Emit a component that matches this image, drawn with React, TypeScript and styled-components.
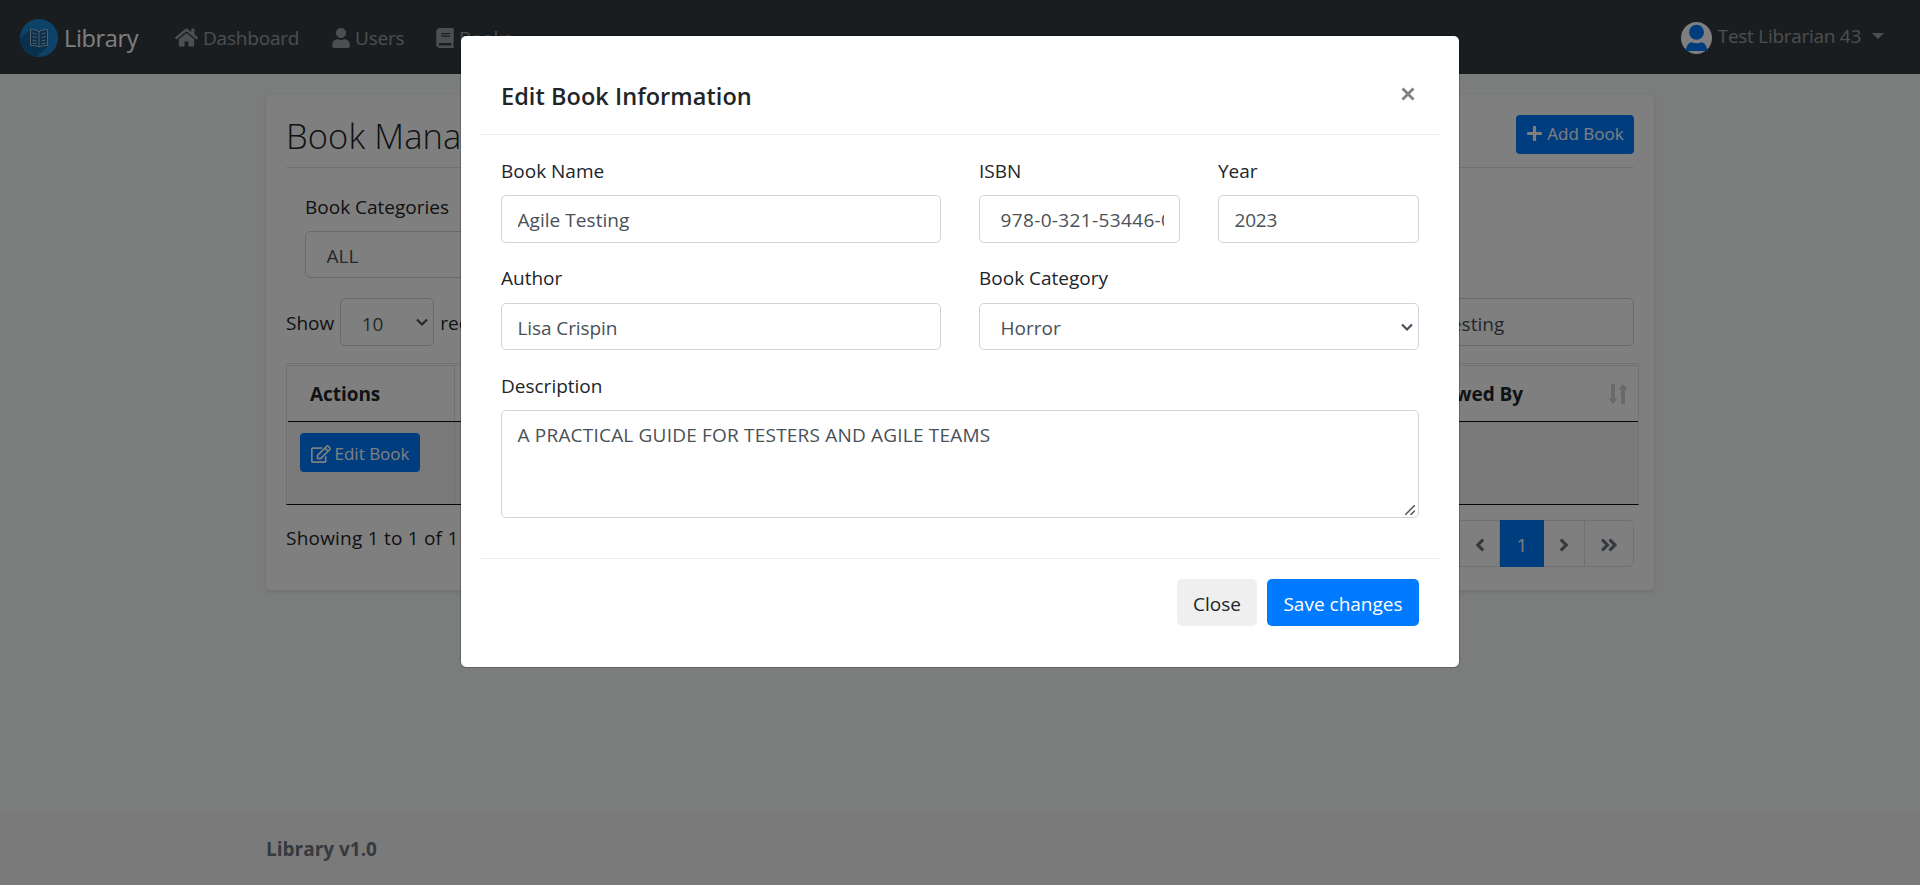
import React from 'react';
import styled, { createGlobalStyle } from 'styled-components';
import {
  FaHome,
  FaUser,
  FaBook,
  FaPlus,
  FaRegEdit,
  FaAngleLeft,
  FaAngleRight,
  FaAngleDoubleLeft,
  FaAngleDoubleRight,
} from 'react-icons/fa';

const GlobalStyle = createGlobalStyle`
  *, *::before, *::after { box-sizing: border-box; }
  body {
    margin: 0;
    overflow: hidden;
    background: #f5faf7;
    color: #212529;
    font-family: "Segoe UI", "Open Sans", "Noto Sans", sans-serif;
    font-size: 19px;
    line-height: 30px;
  }
  svg { display: block; flex: none; }
`;

const Page = styled.div`
  display: flex;
  flex-direction: column;
  height: 885px;
`;

/* ---------- navigation ---------- */

const Navbar = styled.nav`
  display: flex;
  align-items: center;
  height: 74px;
  flex: none;
  padding: 0 36px 0 20px;
  background: #343a40;
`;

const Brand = styled.a`
  display: flex;
  align-items: center;
  gap: 6px;
  width: 155px;
  padding-top: 1px;
  color: #fff;
  font-size: 23.5px;
  letter-spacing: -0.35px;
`;

const NavItem = styled.a<{ $width: number; $gap?: number }>`
  display: flex;
  align-items: center;
  gap: ${(p) => p.$gap ?? 4}px;
  width: ${(p) => p.$width}px;
  padding-top: 1px;
  color: rgba(255, 255, 255, 0.5);
  letter-spacing: -0.2px;
`;

const UserMenu = styled.a`
  display: flex;
  align-items: center;
  gap: 6px;
  margin-left: auto;
  padding-top: 2px;
  color: rgba(255, 255, 255, 0.5);
  letter-spacing: -0.28px;
`;

const UserName = styled.span`
  padding-bottom: 4px;
`;

const Caret = styled.span`
  margin: 0 0 5px 5px;
  border: 6px solid transparent;
  border-top-color: currentColor;
  border-bottom: 0;
`;

/* ---------- card ---------- */

const Card = styled.main`
  display: flex;
  flex-direction: column;
  width: 1388px;
  height: 495px;
  margin: 21px auto 0;
  padding: 20px;
  border-radius: 5px;
  background: #fff;
  box-shadow: 0 2px 5px rgba(0, 0, 0, 0.1);
`;

const CardHeader = styled.header`
  display: flex;
  justify-content: space-between;
  align-items: flex-start;
  height: 53px;
  border-bottom: 1px solid #e5e5e5;
`;

const CardTitle = styled.h2`
  margin: 0;
  font-size: 34.5px;
  font-weight: 300;
  line-height: 42px;
  letter-spacing: 0.1px;
`;

const Button = styled.button<{ $tone?: 'primary' | 'plain'; $small?: boolean }>`
  display: inline-flex;
  align-items: center;
  justify-content: center;
  gap: 4px;
  height: ${(p) => (p.$small ? '39px' : '47px')};
  padding: ${(p) => (p.$small ? '0 11px' : '3px 16px 0')};
  border: 0;
  border-radius: ${(p) => (p.$small ? '4px' : '5px')};
  background: ${(p) => (p.$tone === 'plain' ? '#efefef' : '#007bff')};
  color: ${(p) => (p.$tone === 'plain' ? '#212529' : '#fff')};
  font-family: inherit;
  font-size: ${(p) => (p.$small ? '17px' : '19px')};
  letter-spacing: 0;
  white-space: nowrap;
`;

const AddButton = styled(Button)`
  width: 118px;
  padding-bottom: 2px;
`;

const EditButton = styled(Button)`
  width: 120px;
  padding-top: 2px;
`;

const Filter = styled.div`
  width: 460px;
  padding: 24px 20px 0 19px;
`;

const TableTools = styled.div`
  display: flex;
  justify-content: space-between;
  align-items: center;
  height: 48px;
  margin-top: 20px;
`;

const ToolGroup = styled.div`
  display: flex;
  gap: 6px;
  align-items: center;
`;

const ToolText = styled.span`
  padding-top: 1px;
`;

const LengthBox = styled.div`
  width: 94px;
`;

const SearchBox = styled.div`
  width: 258px;
`;

const TableFrame = styled.div`
  width: 1353px;
  height: 142px;
  margin-top: 17px;
  padding: 1px 0 0 1px;
  border: 1px solid #dee2e6;
  border-bottom-color: #111;
`;

const HeadRow = styled.div`
  display: grid;
  grid-template-columns: 167px 300px 230px 395px 1fr;
  height: 57px;
  border-top: 1px solid #dee2e6;
  border-bottom: 1px solid #111;
`;

const HeadCell = styled.div`
  display: flex;
  align-items: center;
  justify-content: space-between;
  padding: 1px 10px 0 22px;
  border-right: 1px solid #dee2e6;
  font-weight: 700;
  letter-spacing: -0.05px;
  &:last-child { border-right: 0; }
`;

const BodyRow = styled(HeadRow)`
  height: 82px;
  border: 0;
  background: #f2f2f2;
`;

const BodyCell = styled.div`
  padding: 11px 12px;
  border-right: 1px solid #dee2e6;
  &:last-child { border-right: 0; }
`;

const TableFooter = styled.div`
  display: flex;
  justify-content: space-between;
  align-items: flex-start;
  margin-top: 15px;
`;

const Info = styled.div`
  padding-top: 3px;
  letter-spacing: 0.22px;
`;

const Pagination = styled.div`
  display: flex;
  height: 47px;
  border: 1px solid #dee2e6;
  border-radius: 5px;
`;

const PageItem = styled.div<{ $width: number; $active?: boolean }>`
  display: flex;
  align-items: center;
  justify-content: center;
  width: ${(p) => p.$width}px;
  height: 47px;
  margin-top: -1px;
  padding-top: 2px;
  border-right: ${(p) => (p.$active ? '0' : '1px solid #dee2e6')};
  background: ${(p) => (p.$active ? '#007bff' : 'transparent')};
  color: ${(p) => (p.$active ? '#fff' : '#6c757d')};
  &:last-child { border-right: 0; }
`;

const Footer = styled.footer`
  height: 75px;
  flex: none;
  margin-top: auto;
  padding: 24px 266px;
  background: #f5f5f5;
  color: #6c757d;
  font-weight: 700;
`;

/* ---------- form ---------- */

const Label = styled.label<{ $tight?: boolean }>`
  display: block;
  margin-bottom: ${(p) => (p.$tight ? '8.5px' : '9.5px')};
`;

const Input = styled.input<{ $inset?: number; $track?: number }>`
  display: block;
  width: 100%;
  height: 47.5px;
  padding: 3px 15px 0 ${(p) => p.$inset ?? 15.5}px;
  border: 1px solid #ced4da;
  border-radius: 5px;
  background: #fff;
  color: #495057;
  font-family: inherit;
  font-size: 19px;
  outline: none;
  letter-spacing: ${(p) => p.$track ?? 0.05}px;
`;

const TextArea = styled.textarea`
  display: block;
  width: 100%;
  height: 107.5px;
  padding: 9px 15.5px;
  border: 1px solid #ced4da;
  border-radius: 5px;
  color: #495057;
  font-family: inherit;
  font-size: 19px;
  line-height: 30px;
  letter-spacing: 0.2px;
  resize: none;
  outline: none;
`;

const ControlWrap = styled.div`
  position: relative;
`;

const Chevron = styled.svg`
  position: absolute;
  right: 6px;
  top: 20px;
`;

const Grip = styled.svg`
  position: absolute;
  right: 4px;
  bottom: 3px;
`;

const NativeSelect = styled.select`
  display: block;
  width: 100%;
  height: 47.5px;
  padding: 3px 30px 0 20.5px;
  appearance: none;
  border: 1px solid #ced4da;
  border-radius: 5px;
  background: #fff;
  color: #495057;
  font-family: inherit;
  font-size: 19px;
`;

/* ---------- modal ---------- */

const Overlay = styled.div`
  position: absolute;
  inset: 0;
  display: flex;
  justify-content: center;
  align-items: flex-start;
  padding-top: 35px;
  background: rgba(0, 0, 0, 0.5);
`;

const Modal = styled.section`
  width: 1000px;
  height: 633px;
  padding: 20px;
  border: 1px solid rgba(0, 0, 0, 0.2);
  border-radius: 6px;
  background: #fff;
  background-clip: padding-box;
`;

const ModalHeader = styled.header`
  display: flex;
  justify-content: space-between;
  align-items: center;
  height: 79px;
  padding: 1px 20px 0;
  border-bottom: 1px solid #e9ecef;
`;

const ModalTitle = styled.h5`
  margin: 0;
  font-size: 23.5px;
  font-weight: 600;
  letter-spacing: 0.05px;
`;

const CloseMark = styled.button`
  padding: 0;
  margin: 0 4px 3px 0;
  border: 0;
  background: none;
  color: #808080;
`;

const Form = styled.form`
  display: grid;
  grid-template-columns: 440px 201px 201px;
  column-gap: 38px;
  row-gap: 20.5px;
  padding: 20.5px 20px 40px;
`;

const Field = styled.div<{ $span?: number }>`
  grid-column: span ${(p) => p.$span ?? 1};
`;

const ModalFooter = styled.footer`
  display: flex;
  justify-content: flex-end;
  gap: 10px;
  padding: 20px 20px 0;
  border-top: 1px solid #e9ecef;
`;

const CloseButton = styled(Button)`
  width: 80px;
`;

const SaveButton = styled(Button)`
  width: 152px;
`;

function Select({ id, value }: { id: string; value: string }) {
  return (
    <ControlWrap>
      <NativeSelect id={id} defaultValue={value}>
        <option>{value}</option>
      </NativeSelect>
      <Chevron width="12" height="9" viewBox="0 0 12 9" fill="none">
        <path d="M1 1.5 L6 6.5 L11 1.5" stroke="#495057" strokeWidth="2.2" />
      </Chevron>
    </ControlWrap>
  );
}

function SortMark() {
  return (
    <svg width="20" height="20" viewBox="0 0 20 20" fill="#d3d3d3">
      <path d="M3 0 H7 V14.500 H9.500 L5 20 L0.200 14.500 H3 Z" />
      <path d="M13 20 H17 V5.500 H19.800 L15 0 L10.500 5.500 H13 Z" />
    </svg>
  );
}

function Logo() {
  return (
    <svg width="38" height="38" viewBox="0 0 38 38">
      <defs>
        <clipPath id="disc">
          <circle cx="19" cy="19" r="19" />
        </clipPath>
      </defs>
      <circle cx="19" cy="19" r="19" fill="#1b87d2" />
      <path d="M10 10.500 L0 20 V38 H17 L28 27 Z" fill="#126099" clipPath="url(#disc)" />
      <path
        d="M10.500 10.500 C14 10.500 17 11 19 12.800 C21 11 24 10.500 27.500 10.500 V26.500 C24 26.500 21 26.800 19 28 C17 26.800 14 26.500 10.500 26.500 Z M19 12.800 V28"
        fill="#15619a"
        stroke="#a9bccb"
        strokeWidth="1"
      />
      <path
        d="M12.500 14 l4 1 M12.500 17.500 l4 1 M12.500 21 l4 1 M12.500 24 l4 .8 M25.500 14 l-4 1 M25.500 17.500 l-4 1 M25.500 21 l-4 1 M25.500 24 l-4 .8"
        stroke="#a9bccb"
        strokeWidth="1"
      />
    </svg>
  );
}

function Avatar() {
  return (
    <svg width="31" height="32" viewBox="0 0 31 32">
      <ellipse cx="15.500" cy="16" rx="15.500" ry="16" fill="#fff" />
      <circle cx="15.500" cy="10.300" r="7.500" fill="#007bff" />
      <path d="M4.500 29 C5.500 24 7.500 20.500 10.500 20.300 C13.500 21.700 17.500 21.700 20.500 20.300 C23.500 20.500 25.500 24 26.500 29 Z" fill="#007bff" />
    </svg>
  );
}

export default function App() {
  return (
    <>
      <GlobalStyle />
      <Page>
        <Navbar>
          <Brand>
            <Logo />
            Library
          </Brand>
          <NavItem $width={156} $gap={5}>
            <FaHome size={23} />
            Dashboard
          </NavItem>
          <NavItem $width={104}>
            <FaUser size={20} />
            Users
          </NavItem>
          <NavItem $width={90}>
            <FaBook size={20} />
            Books
          </NavItem>
          <UserMenu>
            <Avatar />
            <UserName>Test Librarian 43</UserName>
            <Caret />
          </UserMenu>
        </Navbar>

        <Card>
          <CardHeader>
            <CardTitle>Book Management</CardTitle>
            <AddButton $small>
              <FaPlus size={17} />
              Add Book
            </AddButton>
          </CardHeader>
          <Filter>
            <Label htmlFor="categories" $tight>
              Book Categories
            </Label>
            <Select id="categories" value="ALL" />
          </Filter>
          <TableTools>
            <ToolGroup>
              <ToolText>Show</ToolText>
              <LengthBox>
                <Select id="length" value="10" />
              </LengthBox>
              <ToolText>rec.</ToolText>
            </ToolGroup>
            <ToolGroup>
              <ToolText>Search:</ToolText>
              <SearchBox>
                <Input defaultValue="Agile Testing" />
              </SearchBox>
            </ToolGroup>
          </TableTools>
          <TableFrame>
            <HeadRow>
              <HeadCell>Actions</HeadCell>
              <HeadCell>Book Name</HeadCell>
              <HeadCell>Author</HeadCell>
              <HeadCell>Description</HeadCell>
              <HeadCell>
                Borrowed By
                <SortMark />
              </HeadCell>
            </HeadRow>
            <BodyRow>
              <BodyCell>
                <EditButton $small>
                  <FaRegEdit size={20} />
                  Edit Book
                </EditButton>
              </BodyCell>
              <BodyCell>Agile Testing</BodyCell>
              <BodyCell>Lisa Crispin</BodyCell>
              <BodyCell />
              <BodyCell />
            </BodyRow>
          </TableFrame>
          <TableFooter>
            <Info>Showing 1 to 1 of 1 records</Info>
            <Pagination>
              <PageItem $width={49}>
                <FaAngleDoubleLeft size={20} />
              </PageItem>
              <PageItem $width={40}>
                <FaAngleLeft size={20} />
              </PageItem>
              <PageItem $width={44} $active>
                1
              </PageItem>
              <PageItem $width={41}>
                <FaAngleRight size={20} />
              </PageItem>
              <PageItem $width={48}>
                <FaAngleDoubleRight size={20} />
              </PageItem>
            </Pagination>
          </TableFooter>
        </Card>

        <Footer>Library v1.0</Footer>
      </Page>

      <Overlay>
        <Modal>
          <ModalHeader>
            <ModalTitle>Edit Book Information</ModalTitle>
            <CloseMark aria-label="Close">
              <svg width="14" height="14" viewBox="0 0 14 14">
                <path d="M1.500 1.500 L12.500 12.500 M12.500 1.500 L1.500 12.500" stroke="currentColor" strokeWidth="2.800" />
              </svg>
            </CloseMark>
          </ModalHeader>
          <Form>
            <Field>
              <Label htmlFor="name">Book Name</Label>
              <Input id="name" defaultValue="Agile Testing" />
            </Field>
            <Field>
              <Label htmlFor="isbn">ISBN</Label>
              <Input id="isbn" $inset={20.5} $track={0.36} defaultValue="978-0-321-53446-0" />
            </Field>
            <Field>
              <Label htmlFor="year">Year</Label>
              <Input id="year" $track={-0.2} defaultValue="2023" />
            </Field>
            <Field>
              <Label htmlFor="author">Author</Label>
              <Input id="author" $track={-0.1} defaultValue="Lisa Crispin" />
            </Field>
            <Field $span={2}>
              <Label htmlFor="category">Book Category</Label>
              <Select id="category" value="Horror" />
            </Field>
            <Field $span={3}>
              <Label htmlFor="description">Description</Label>
              <ControlWrap>
                <TextArea id="description" defaultValue="A PRACTICAL GUIDE FOR TESTERS AND AGILE TEAMS" />
                <Grip width="10" height="10" viewBox="0 0 10 10">
                  <path d="M0 10 L10 0 M5.500 10 L10 5.500" stroke="#555" strokeWidth="1.500" />
                </Grip>
              </ControlWrap>
            </Field>
          </Form>
          <ModalFooter>
            <CloseButton $tone="plain">Close</CloseButton>
            <SaveButton>Save changes</SaveButton>
          </ModalFooter>
        </Modal>
      </Overlay>
    </>
  );
}
